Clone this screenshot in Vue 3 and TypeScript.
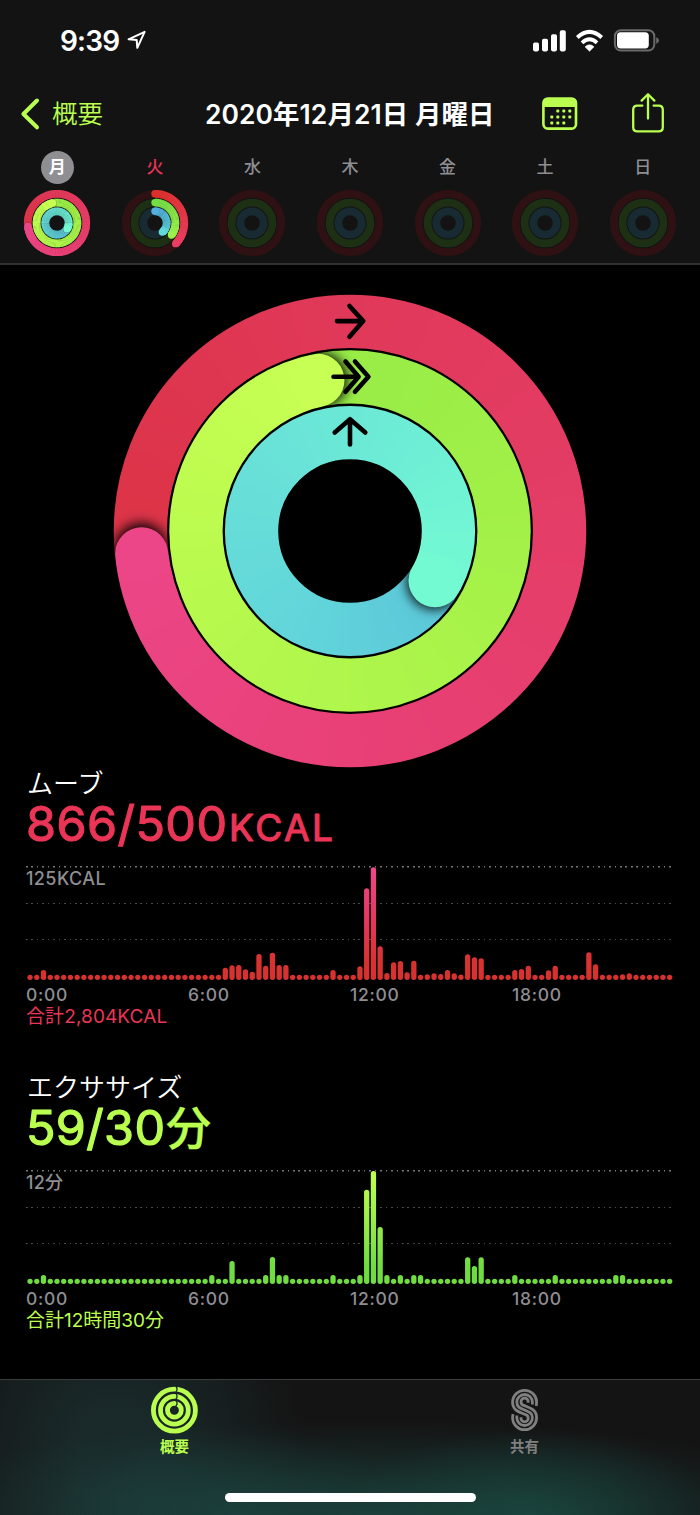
<script setup lang="ts">
type RGB = [number, number, number]
interface Ring { r: number; end: number; span: number; stops: RGB[] }
interface Seg { d: string; c: string }

const hex = (h: string): RGB => [1, 3, 5].map(i => parseInt(h.slice(i, i + 2), 16)) as RGB
const MOVE = ['#dc3346', '#e03858', '#e43d66', '#e84076', '#ec4688'].map(hex)
const EXER = ['#97ec46', '#a1f048', '#aef54b', '#bafa4e', '#c8ff54'].map(hex)
const STAND = ['#5bc6d9', '#62d6da', '#68e0d8', '#6dedd5', '#74fad3'].map(hex)

function mix(stops: RGB[], t: number): string {
  const p = Math.min(Math.max(t, 0), 0.9999) * (stops.length - 1)
  const i = Math.floor(p)
  const f = p - i
  return `rgb(${stops[i].map((v, k) => Math.round(v + (stops[i + 1][k] - v) * f)).join(',')})`
}
function pt(r: number, deg: number): string {
  const a = (deg * Math.PI) / 180
  return `${(r * Math.sin(a)).toFixed(3)} ${(-r * Math.cos(a)).toFixed(3)}`
}
function arc(r: number, a: number, b: number): string {
  return `M${pt(r, a)}A${r} ${r} 0 ${b - a > 180 ? 1 : 0} 1 ${pt(r, b)}`
}
function segments(ring: Ring, last = ring.span): Seg[] {
  const out: Seg[] = []
  const start = ring.end - ring.span
  for (let a = ring.end - last; a < ring.end - 0.01; a += 3) {
    out.push({ d: arc(ring.r, a, Math.min(a + 4, ring.end)), c: mix(ring.stops, (a - start) / ring.span) })
  }
  return out
}
function xy(r: number, deg: number): { x: number; y: number } {
  const a = (deg * Math.PI) / 180
  return { x: r * Math.sin(a), y: -r * Math.cos(a) }
}

const big: Ring[] = [
  { r: 209.6, end: 263.8, span: 360, stops: MOVE },
  { r: 154.05, end: 348, span: 360, stops: EXER },
  { r: 98.45, end: 120.3, span: 360, stops: STAND },
]
const small: Ring[] = [
  { r: 29.2, end: 263.5, span: 360, stops: MOVE },
  { r: 20.4, end: 348, span: 360, stops: EXER },
  { r: 11.7, end: 120.3, span: 360, stops: STAND },
]
const partial: Ring[] = [
  { r: 29.2, end: 135, span: 135, stops: ['#dc302c', '#e93e62'].map(hex) },
  { r: 20.4, end: 126, span: 126, stops: ['#74de46', '#9cf04a'].map(hex) },
  { r: 11.7, end: 141, span: 141, stops: ['#52b0e0', '#62dadb'].map(hex) },
]
const tracks = [
  { r: 29.2, c: '#2f1113' },
  { r: 20.4, c: '#1d3014' },
  { r: 11.7, c: '#182a32' },
]
const days = [
  { name: '月', kind: 'selected', rings: small },
  { name: '火', kind: 'today', rings: partial },
  { name: '水', kind: 'future', rings: [] as Ring[] },
  { name: '木', kind: 'future', rings: [] as Ring[] },
  { name: '金', kind: 'future', rings: [] as Ring[] },
  { name: '土', kind: 'future', rings: [] as Ring[] },
  { name: '日', kind: 'future', rings: [] as Ring[] },
]

function series(values: Record<number, number>): number[] {
  return Array.from({ length: 96 }, (_, i) => values[i] ?? 5.3)
}
const moveBars = series({
  2: 10, 29: 12.3, 30: 14.7, 31: 15, 32: 10.7, 33: 8.3, 34: 26, 35: 14.3, 36: 27.3, 37: 15, 38: 15, 45: 10,
  49: 13.7, 50: 91.7, 51: 112.7, 52: 33.7, 53: 7, 54: 17.7, 55: 19, 56: 7.7, 57: 19.3, 59: 5.7, 60: 6.7, 61: 6,
  62: 10, 63: 6.7, 64: 5.5, 65: 25.7, 66: 22.7, 67: 21.7, 72: 10, 73: 11, 74: 14.3, 77: 9.7, 78: 14.3,
  83: 27.7, 84: 15.7, 88: 5.7, 89: 6.7,
})
const exerciseBars = series({
  2: 9, 27: 9, 30: 23, 35: 9, 36: 27, 37: 9, 38: 9, 45: 9, 49: 9, 50: 94.3, 51: 113, 52: 57, 53: 9, 55: 9,
  57: 9, 58: 9, 65: 26.7, 66: 18, 67: 26.7, 72: 9, 78: 9, 87: 9, 88: 9,
})
const sections = [
  { key: 'move', title: 'ムーブ', value: '866/500', valueW: 201, unit: 'KCAL', unitX: 202, unitW: 104, peak: '125KCAL', total: '合計2,804KCAL', bars: moveBars, ramp: ['#f0488c', '#e43860', '#d7322f'] },
  { key: 'exercise', title: 'エクササイズ', value: '59/30', valueW: 139, unit: '分', unitX: 139, unitW: 45, peak: '12分', total: '合計12時間30分', bars: exerciseBars, ramp: ['#c2ff50', '#9aec48', '#70dc42'] },
]
const hours = ['0:00', '6:00', '12:00', '18:00']
const dots = [[2, 0], [3, 0], [4, 0], [1, 1], [2, 1], [3, 1], [4, 1], [1, 2], [2, 2], [3, 2]]
</script>

<template>
  <div class="screen">
    <header class="top">
      <div class="status">
        <span class="time">9:39</span>
        <svg class="loc" width="20" height="20" viewBox="0 0 20 20">
          <path d="M1.6 9.3 17.6 1.9 10.3 17.8 9.7 10Z" fill="none" stroke="#fff" stroke-width="2" stroke-linejoin="round" />
        </svg>
        <svg class="sys" width="130" height="24" viewBox="0 0 130 24">
          <g fill="#fff">
            <rect x="3" y="13.6" width="6" height="8.8" rx="1.8" />
            <rect x="12" y="9.8" width="6" height="12.6" rx="1.8" />
            <rect x="21" y="5.2" width="6" height="17.2" rx="1.8" />
            <rect x="29.8" y="1.2" width="6" height="21.2" rx="1.8" />
            <path d="M59.5 22.2 55 17.8Q59.5 13.8 64 17.8Z" stroke="#fff" stroke-width=".6" />
          </g>
          <g fill="none" stroke="#fff" stroke-width="4">
            <path d="M47.3 8.4Q59.5-2.6 71.7 8.4" />
            <path d="M52 13.8Q59.5 6.8 67 13.8" stroke-width="3.8" />
          </g>
          <rect x="84.9" y="1.2" width="39.4" height="20.4" rx="6" fill="none" stroke="#6b6b6b" stroke-width="2" />
          <rect x="87" y="3.2" width="31.8" height="16.2" rx="3.6" fill="#fff" />
          <path d="M126.2 8.2Q129 9.2 129 11.5T126.2 14.8Z" fill="#6b6b6b" />
        </svg>
      </div>
      <nav class="bar">
        <svg class="chev" width="20" height="32" viewBox="0 0 20 32">
          <path d="M17 2.5 3.4 16 17 29.3" fill="none" stroke="#baff4f" stroke-width="4" stroke-linecap="round" stroke-linejoin="round" />
        </svg>
        <span class="back">概要</span>
        <h1>2020年12月21日 月曜日</h1>
        <svg class="cal" width="36" height="34" viewBox="0 0 36 34">
          <rect x="1.4" y="1.6" width="32.6" height="30" rx="4.4" fill="none" stroke="#baff4f" stroke-width="2.6" />
          <path d="M1 10V5Q1 1 5 1H30.5Q34.5 1 34.5 5V10Z" fill="#baff4f" />
          <rect v-for="(d, i) in dots" :key="i" :x="2.3 + d[0] * 6" :y="12.6 + d[1] * 5.9" width="3" height="3" rx="1" fill="#baff4f" />
        </svg>
        <svg class="share" width="34" height="42" viewBox="0 0 34 42">
          <g fill="none" stroke="#baff4f" stroke-width="2.3" stroke-linecap="round" stroke-linejoin="round">
            <path d="M11.4 13.6H6.4Q2.2 13.6 2.2 17.8V35.2Q2.2 39.4 6.4 39.4H27.6Q31.8 39.4 31.8 35.2V17.8Q31.8 13.6 27.6 13.6H22.6" />
            <path d="M17 26.6V2.4M10.6 8.6 17 2.2 23.4 8.6" />
          </g>
        </svg>
      </nav>
      <ul class="week">
        <li v-for="day in days" :key="day.name">
          <span class="day" :class="day.kind">{{ day.name }}</span>
          <svg width="68" height="68" viewBox="-34 -34 68 68">
            <g fill="none" stroke-width="7.8">
              <circle v-for="t in tracks" :key="t.r" :r="t.r" :stroke="t.c" />
              <template v-for="ring in day.rings" :key="ring.r">
                <circle v-if="ring.span < 360" :cx="0" :cy="-ring.r" r="3.7" stroke="none" :fill="mix(ring.stops, 0)" />
                <path v-for="(s, i) in segments(ring)" :key="i" :d="s.d" :stroke="s.c" />
                <circle v-if="ring.span === 360" :cx="xy(ring.r, ring.end).x" :cy="xy(ring.r, ring.end).y" r="4.1" stroke="none" fill="#000" fill-opacity=".35" />
                <path v-for="(s, i) in segments(ring, 27)" :key="'e' + i" :d="s.d" :stroke="s.c" />
                <circle :cx="xy(ring.r, ring.end).x" :cy="xy(ring.r, ring.end).y" r="3.7" stroke="none" :fill="mix(ring.stops, 1)" />
              </template>
            </g>
          </svg>
        </li>
      </ul>
    </header>

    <main>
      <svg class="rings" width="476" height="476" viewBox="-238 -238 476 476">
        <defs>
          <filter id="soft" x="-50%" y="-50%" width="200%" height="200%"><feGaussianBlur stdDeviation="6" /></filter>
          <mask v-for="(ring, i) in big" :id="'band' + i" :key="i" maskUnits="userSpaceOnUse" x="-238" y="-238" width="476" height="476">
            <circle :r="ring.r" fill="none" stroke="#fff" stroke-width="53.3" />
          </mask>
        </defs>
        <g v-for="(ring, i) in big" :key="ring.r" fill="none" stroke-width="55.5" :mask="`url(#band${i})`">
          <path v-for="(s, k) in segments(ring)" :key="k" :d="s.d" :stroke="s.c" />
          <circle :cx="xy(ring.r, ring.end + 1).x" :cy="xy(ring.r, ring.end + 1).y" r="27" stroke="none" fill="#000" fill-opacity=".95" filter="url(#soft)" />
          <path v-for="(s, k) in segments(ring, 45)" :key="'e' + k" :d="s.d" :stroke="s.c" stroke-width="53.3" />
          <circle :cx="xy(ring.r, ring.end).x" :cy="xy(ring.r, ring.end).y" r="26.5" stroke="none" :fill="mix(ring.stops, 1)" />
        </g>
        <g fill="none" stroke="#000" stroke-width="4.6" stroke-linecap="round" stroke-linejoin="round">
          <path d="M-13-209.9H13M-.5-225 13.2-209.9-.5-194.2" />
          <path d="M-16.5-154.2H8M-4.5-169.5 8.6-154.2-4.5-139.2M5-169.5 18.4-154.2 5-139.2" />
          <path d="M0-86.5V-111.8M-15.3-98.4 0-111.8 15.3-98.4" />
        </g>
      </svg>

      <section v-for="s in sections" :key="s.key" :class="s.key">
        <h2>{{ s.title }}</h2>
        <svg class="value" width="330" height="52" viewBox="0 0 330 52">
          <text x="-1" y="43" :textLength="s.valueW" class="num">{{ s.value }}</text>
          <text :x="s.unitX" y="43" :textLength="s.unitW" class="unit">{{ s.unit }}</text>
        </svg>
        <div class="chart">
          <span class="peak">{{ s.peak }}</span>
          <svg class="bars" width="647" height="114" viewBox="0 0 647 114">
            <defs>
              <linearGradient :id="s.key + '-ramp'" gradientUnits="userSpaceOnUse" x1="0" y1="1" x2="0" y2="114">
                <stop offset="0" :stop-color="s.ramp[0]" />
                <stop offset=".45" :stop-color="s.ramp[1]" />
                <stop offset=".85" :stop-color="s.ramp[2]" />
              </linearGradient>
            </defs>
            <g :fill="`url(#${s.key}-ramp)`">
              <rect v-for="(h, i) in s.bars" :key="i" :x="1.4 + i * 6.733" :y="114 - h" width="5.3" :height="h" rx="2.65" />
            </g>
          </svg>
        </div>
        <div class="hours"><span v-for="h in hours" :key="h">{{ h }}</span></div>
        <p class="total">{{ s.total }}</p>
      </section>
    </main>

    <footer>
      <div class="tabs">
        <div class="tab active">
          <svg width="50" height="50" viewBox="-24.4 -24.2 50 50">
            <g fill="none" stroke="#baff4f" stroke-width="4.8">
              <circle v-for="r in [21, 13.9, 6.9]" :key="r" :r="r" />
            </g>
            <path v-for="r in [21, 13.9, 6.9]" :key="'c' + r" :d="`M1.4 ${-r - 2.9}Q4 ${-r} 1.4 ${-r + 2.9}`" fill="none" stroke="#16282a" stroke-width="1.3" />
          </svg>
          <span>概要</span>
        </div>
        <div class="tab">
          <svg width="50" height="50" viewBox="-24.6 -24 50 50">
            <g fill="none" stroke="#808080" stroke-width="2.8">
              <path d="M11.5-4.2A12 12 0 0 0 12-7.7A12 12 0 0 0-12-7.7C-12 1 -4.5 2.4 1 4.6A3.7 3.7 0 0 1 3.6 8.2A3.6 3.6 0 0 1-3.6 8.2V7.2" />
              <path d="M7.8-5.4V-7.7A7.8 7.8 0 0 0-7.8-7.7C-7.8-2.6-3.8-1.6 0 0S7.8 2.6 7.8 7.7A7.8 7.8 0 0 1-7.8 7.7V5.4" />
              <path d="M3.6-7.2V-8.2A3.6 3.6 0 0 0-3.6-8.2A3.7 3.7 0 0 0-1-4.6C4.5-2.4 12-1 12 7.7A12 12 0 0 1-12 7.7A12 12 0 0 1-11.5 4.2" />
            </g>
          </svg>
          <span>共有</span>
        </div>
      </div>
      <div class="home"></div>
    </footer>
  </div>
</template>

<style>
html, body { background: #000; }
</style>
<style scoped>
* { box-sizing: border-box; margin: 0; padding: 0; }
.screen { width: 700px; height: 1515px; background: #000; color: #fff; font-family: Inter, "Noto Sans CJK JP", sans-serif; display: flex; flex-direction: column; overflow: hidden; }
svg { display: block; flex: none; overflow: visible; }
.top { height: 265px; background: #131313; border-bottom: 2px solid #303032; flex: none; }
.status { height: 82px; padding: 0 40px 0 60px; display: flex; align-items: center; }
.time { font-size: 28px; font-weight: 600; letter-spacing: -.8px; width: 67px; white-space: nowrap; }
.loc { margin-bottom: 3px; }
.sys { margin-left: auto; margin-bottom: 1px; }
.bar { height: 64px; display: flex; align-items: center; padding-left: 20px; white-space: nowrap; }
.bar .back { margin-left: 12px; width: 153px; font-size: 25.5px; line-height: 40px; color: #baff4f; font-weight: 350; }
h1 { width: 290px; font-size: 26.4px; line-height: 40px; font-weight: 600; letter-spacing: .1px; }
.cal { margin-left: 47px; margin-bottom: 1px; }
.share { margin-left: 53px; margin-bottom: 2px; }
.week { list-style: none; display: grid; grid-template-columns: repeat(7, 1fr); padding: 5px 8.6px 0; }
.week li { display: flex; flex-direction: column; align-items: center; gap: 5px; }
.day { width: 33px; height: 33px; border-radius: 50%; line-height: 32px; text-align: center; font-size: 17px; font-weight: 500; color: #8e8e93; }
.day.selected { background: #8e8e93; color: #fff; font-weight: 700; }
.day.today { color: #ea3556; }
main { flex: 1; display: flex; flex-direction: column; min-height: 0; }
.rings { margin: 28px 0 0 112px; }
section { height: 304px; padding: 0 27px; flex: none; }
h2 { font-size: 26px; line-height: 29px; height: 29px; font-weight: 350; white-space: nowrap; }
.value text { fill: currentColor; stroke: currentColor; stroke-linejoin: round; stroke-linecap: round; stroke-width: 1.2; }
.num { font-size: 48.5px; font-weight: 400; }
.unit { font-size: 37px; font-weight: 400; }
.exercise .unit { font-size: 45px; font-weight: 500; stroke-width: .4px; }
.move .value { color: #ea3556; }
.exercise .value { color: #baff4f; }
.chart { height: 115px; margin-left: -1px; margin-top: 16px; display: grid; width: 647px;
  background:
    repeating-linear-gradient(90deg, #77777a 0 1.6px, transparent 1.6px 5.45px) 0 0 / 100% 1.5px no-repeat,
    repeating-linear-gradient(90deg, #4a4a4c 0 1.6px, transparent 1.6px 5.45px) 0 37px / 100% 1px no-repeat,
    repeating-linear-gradient(90deg, #4a4a4c 0 1.6px, transparent 1.6px 5.45px) 0 73px / 100% 1px no-repeat; }
.peak { grid-area: 1 / 1; font-size: 18px; line-height: 26px; color: #8e8e93; font-weight: 500; letter-spacing: .4px; }
.exercise .peak { letter-spacing: .2px; }
.bars { grid-area: 1 / 1; }
.hours { display: grid; grid-template-columns: repeat(4, 162px); font-size: 17.5px; line-height: 22px; margin: 3px 0 0 -1px; color: #8e8e93; font-weight: 500; letter-spacing: .7px; }
.total { font-size: 19px; line-height: 24px; height: 24px; color: #ea3556; white-space: nowrap; margin: -1px 0 0 -1px; letter-spacing: .1px; font-weight: 400; }
.exercise .total { color: #baff4f; letter-spacing: 0; }
footer { height: 136px; flex: none; border-top: 1px solid #3b3d3d; display: flex; flex-direction: column; justify-content: space-between; align-items: center; padding: 6px 0 13px;
  background:
    radial-gradient(ellipse 200px 80px at 240px 100%, #1c4a4677, transparent),
    radial-gradient(ellipse 190px 85px at 530px 100%, #1b524999, transparent),
    radial-gradient(ellipse 480px 95px at 370px 100%, #1c4a43bb, transparent),
    radial-gradient(ellipse 190px 230px at 115px 60%, #1b2f30cc 20%, transparent),
    #141414; }
.tabs { width: 700px; display: grid; grid-template-columns: 1fr 1fr; margin-left: -1px; }
.tab { display: flex; flex-direction: column; align-items: center; font-size: 14.5px; line-height: 22px; font-weight: 700; color: #808080; }
.active { color: #baff4f; }
.home { width: 251px; height: 9px; border-radius: 5px; background: #fff; }
</style>
